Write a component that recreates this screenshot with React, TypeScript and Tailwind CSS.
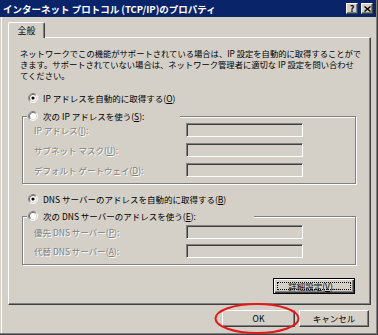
import type { ReactNode } from "react";

const font = "font-['Noto_Sans_CJK_JP','Noto_Sans',sans-serif]";

function Radio({ checked }: { checked?: boolean }) {
  return (
    <svg width="10" height="10" viewBox="0 0 12 12" className="shrink-0">
      <circle cx="6" cy="6" r="5" fill="#fff" />
      <path d="M9.89 2.11 A5.5 5.5 0 0 0 2.11 9.89" fill="none" stroke="#808080" />
      <path d="M9.89 2.11 A5.5 5.5 0 0 1 2.11 9.89" fill="none" stroke="#fff" />
      <path d="M9.18 2.82 A4.5 4.5 0 0 0 2.82 9.18" fill="none" stroke="#404040" />
      <path d="M9.18 2.82 A4.5 4.5 0 0 1 2.82 9.18" fill="none" stroke="#d4d0c8" />
      {checked && <circle cx="6" cy="6" r="1.9" fill="#000" />}
    </svg>
  );
}

function Key({ k }: { k: string }) {
  return (
    <>
      (<span className="underline underline-offset-1">{k}</span>)
    </>
  );
}

function Field({ label, first, gap }: { label: ReactNode; first?: boolean; gap: string }) {
  return (
    <div className={`flex items-center ${first ? "" : gap}`}>
      <div className="w-[163px] pl-[11px] text-[#808080] [text-shadow:1px_1px_0_#fff] whitespace-nowrap">
        {label}
      </div>
      <div className="w-[117px] h-[14px] bg-[#d4d0c8] border border-t-[#808080] border-l-[#808080] border-b-white border-r-white shadow-[inset_1px_1px_0_#404040]" />
    </div>
  );
}

function Legend({ width, children }: { width: string; children: ReactNode }) {
  return (
    <div className={`-mt-[7px] ml-[4px] ${width} h-[12px] bg-[#d4d0c8] flex items-center gap-[5px] pl-[1px] whitespace-nowrap`}>
      <Radio />
      <span>{children}</span>
    </div>
  );
}

export default function App() {
  return (
    <div
      className={`relative w-[378px] h-[335px] overflow-hidden bg-[#d4d0c8] text-[8.5px] leading-[10px] text-black ${font} shadow-[inset_-1px_-1px_0_#404040,inset_-2px_-2px_0_#808080,inset_1px_0_0_#d4d0c8,inset_2px_0_0_#fff]`}
    >
      {/* title bar */}
      <div className="w-[376px] h-[17px] bg-[#0a246a] flex items-center justify-between pl-[3px] pr-[3px]">
        <span className="text-white font-bold text-[9.5px] whitespace-nowrap">
          インターネット プロトコル (TCP/IP)のプロパティ
        </span>
        <div className="flex gap-[3px]">
          <div className="w-[12px] h-[11px] bg-[#d4d0c8] border border-t-white border-l-white border-b-[#404040] border-r-[#404040] shadow-[inset_-1px_-1px_0_#808080] flex items-center justify-center text-[9px] font-bold leading-none">
            ?
          </div>
          <div className="w-[12px] h-[11px] bg-[#d4d0c8] border border-t-white border-l-white border-b-[#404040] border-r-[#404040] shadow-[inset_-1px_-1px_0_#808080] flex items-center justify-center">
            <svg width="7" height="6" viewBox="0 0 7 6">
              <path d="M0.5 0.5 L6.5 5.5 M6.5 0.5 L0.5 5.5" stroke="#000" strokeWidth="1.4" />
            </svg>
          </div>
        </div>
      </div>

      {/* tab */}
      <div className="relative z-10 ml-[8px] mt-[5px] w-[37px] h-[16px] bg-[#d4d0c8] border-t border-l border-r border-t-white border-l-white border-r-[#404040] shadow-[inset_-1px_0_0_#808080] rounded-t-[2px] flex items-center justify-center text-[9px]">
        全般
      </div>

      {/* panel */}
      <div className="-mt-[1px] ml-[8px] w-[363px] h-[268px] border border-t-white border-l-white border-r-[#404040] border-b-[#404040] shadow-[inset_-1px_-1px_0_#808080]">
        <div className="mt-[10px] pl-[11px] whitespace-nowrap leading-[11px] text-[8.3px]">
          <div>ネットワークでこの機能がサポートされている場合は、IP 設定を自動的に取得することがで</div>
          <div>きます。サポートされていない場合は、ネットワーク管理者に適切な IP 設定を問い合わせ</div>
          <div>てください。</div>
        </div>

        <div className="mt-[11px] ml-[19px] h-[12px] flex items-center gap-[5px] whitespace-nowrap">
          <Radio checked />
          <span>
            IP アドレスを自動的に取得する<Key k="O" />
          </span>
        </div>

        <div className="mt-[12px] ml-[13px] w-[334px] pb-[6px] border border-[#808080] shadow-[inset_1px_1px_0_#fff,1px_1px_0_#fff]">
          <Legend width="w-[153px]">
            次の IP アドレスを使う<Key k="S" />:
          </Legend>
          <div className="mt-[1px]">
            <Field first gap="mt-[6px]" label={<>IP アドレス<Key k="I" />:</>} />
            <Field gap="mt-[6px]" label={<>サブネット マスク<Key k="U" />:</>} />
            <Field gap="mt-[6px]" label={<>デフォルト ゲートウェイ<Key k="D" />:</>} />
          </div>
        </div>

        <div className="mt-[9px] ml-[19px] h-[12px] flex items-center gap-[5px] whitespace-nowrap">
          <Radio checked />
          <span>
            DNS サーバーのアドレスを自動的に取得する<Key k="B" />
          </span>
        </div>

        <div className="mt-[11px] ml-[13px] w-[334px] pb-[6px] border border-[#808080] shadow-[inset_1px_1px_0_#fff,1px_1px_0_#fff]">
          <Legend width="w-[227px]">
            次の DNS サーバーのアドレスを使う<Key k="E" />:
          </Legend>
          <div className="mt-[3px]">
            <Field first gap="mt-[5px]" label={<>優先 DNS サーバー<Key k="P" />:</>} />
            <Field gap="mt-[5px]" label={<>代替 DNS サーバー<Key k="A" />:</>} />
          </div>
        </div>

        <div className="mt-[13px] ml-[264px] w-[82px] h-[16px] border border-black bg-[#d4d0c8] shadow-[inset_1px_1px_0_#fff,inset_-1px_-1px_0_#404040,inset_-2px_-2px_0_#808080] p-[3px]">
          <div className="w-full h-full border border-dotted border-black flex items-center justify-center whitespace-nowrap leading-none">
            詳細設定<Key k="V" />...
          </div>
        </div>
      </div>

      {/* dialog buttons */}
      <div className="mt-[5px] flex">
        <div className="ml-[222px] w-[73px] h-[17px] bg-[#d4d0c8] border border-t-white border-l-white border-b-[#404040] border-r-[#404040] shadow-[inset_-1px_-1px_0_#808080] flex items-center justify-center leading-none">
          OK
        </div>
        <div className="ml-[4px] w-[70px] h-[17px] bg-[#d4d0c8] border border-t-white border-l-white border-b-[#404040] border-r-[#404040] shadow-[inset_-1px_-1px_0_#808080] flex items-center justify-center leading-none">
          キャンセル
        </div>
      </div>

      {/* red highlight ellipse */}
      <svg className="absolute left-[213px] top-[302px]" width="88" height="33" viewBox="0 0 88 33">
        <ellipse cx="44" cy="16.5" rx="41.5" ry="14.5" fill="none" stroke="#e41818" strokeWidth="2" />
      </svg>
    </div>
  );
}
